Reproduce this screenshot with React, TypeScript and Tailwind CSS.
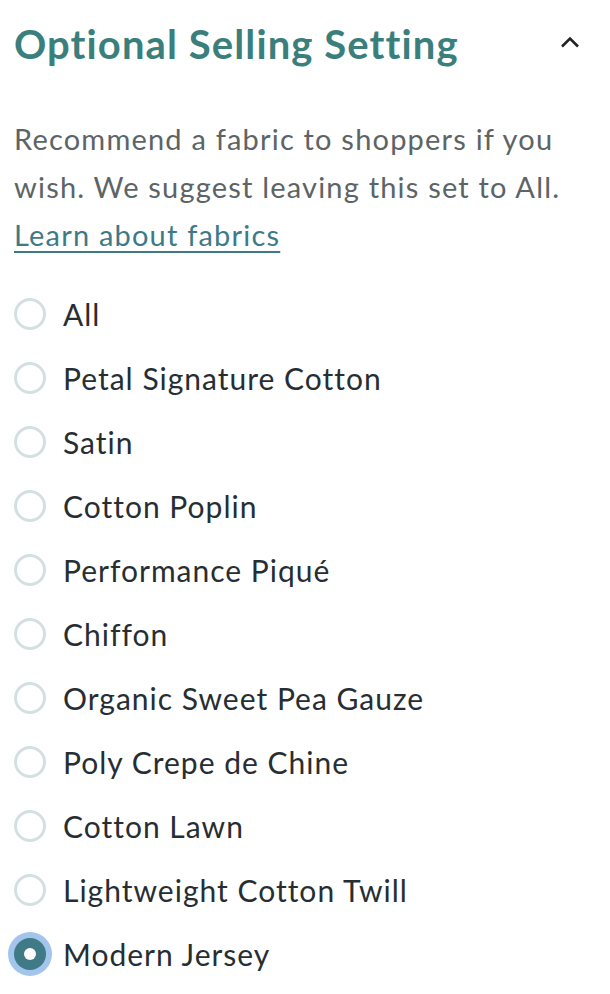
import { useState } from "react";

const fabrics = [
  "All",
  "Petal Signature Cotton",
  "Satin",
  "Cotton Poplin",
  "Performance Piqué",
  "Chiffon",
  "Organic Sweet Pea Gauze",
  "Poly Crepe de Chine",
  "Cotton Lawn",
  "Lightweight Cotton Twill",
  "Modern Jersey",
];

export default function App() {
  const [selected, setSelected] = useState("Modern Jersey");

  return (
    <div className="min-h-screen bg-white px-[14px] font-['Lato','Noto_Sans',sans-serif]">
      <div className="flex items-center justify-between pt-[18px]">
        <h2 className="text-[40px] font-bold leading-[52px] tracking-[1.1px] text-[#3a7f7b]">
          Optional Selling Setting
        </h2>
        <svg
          width="20"
          height="12"
          viewBox="0 0 20 12"
          className="mr-[16px] mt-[-4px]"
          fill="none"
          stroke="#222"
          strokeWidth="2.6"
        >
          <path d="M2 10.5 10 2.5 18 10.5" />
        </svg>
      </div>

      <p className="mt-[45px] text-[29px] leading-[48px] tracking-[1.2px] text-[#5c6466]">
        Recommend a fabric to shoppers if you wish. We suggest leaving this set
        to All.{" "}
        <a href="#" className="text-[#3e7a86] underline underline-offset-[5px] decoration-2">
          Learn about fabrics
        </a>
      </p>

      <div className="mt-[23px] flex flex-col">
        {fabrics.map((f) => {
          const on = f === selected;
          return (
            <label
              key={f}
              onClick={() => setSelected(f)}
              className="flex h-[64px] cursor-pointer items-center gap-[17px]"
            >
              <span
                className={`flex size-[32px] shrink-0 items-center justify-center rounded-full ${
                  on
                    ? "bg-[#3f7a86] ring-[6px] ring-[#a3c5ec]"
                    : "border-[3px] border-[#d4dfe2]"
                }`}
              >
                {on && <span className="size-[12px] rounded-full bg-white" />}
              </span>
              <span className="text-[30px] leading-none tracking-[1px] text-[#262e33]">{f}</span>
            </label>
          );
        })}
      </div>
    </div>
  );
}
